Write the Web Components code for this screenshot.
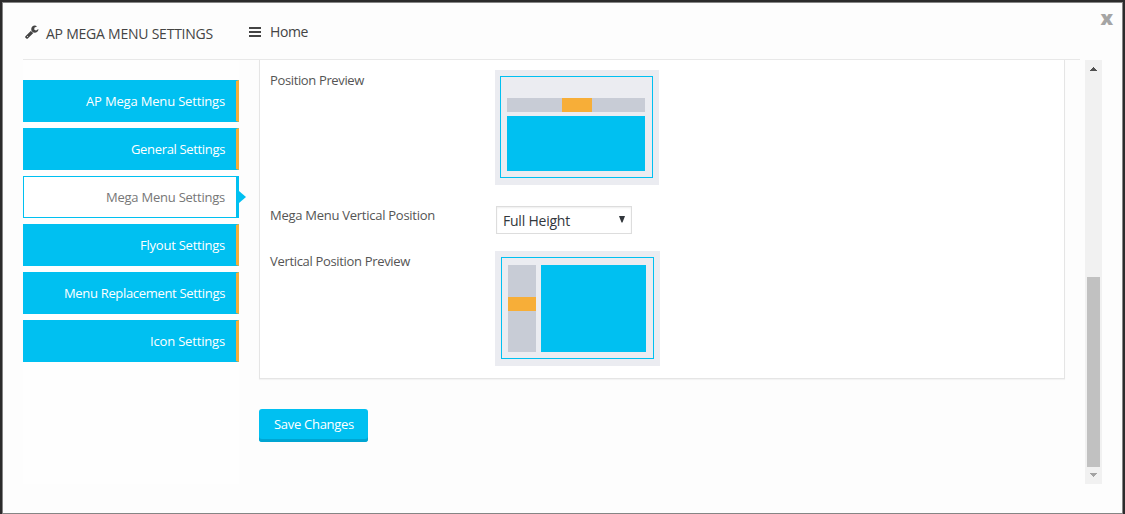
<!DOCTYPE html>
<html lang="en">
<head>
<meta charset="utf-8">
<title>AP Mega Menu Settings</title>
<style>
html,body{margin:0;height:100%;overflow:hidden;background:#2c2b2c}
body{font-family:"Open Sans","Noto Sans",sans-serif;font-size:13px;color:#555}
</style>
</head>
<body>
<settings-modal></settings-modal>
<script>
function define(name, html) {
  const template = document.createElement('template');
  template.innerHTML = html;
  customElements.define(name, class extends HTMLElement {
    constructor() {
      super();
      this.attachShadow({ mode: 'open' }).append(template.content.cloneNode(true));
    }
  });
}

/* One line of text, tracked so that it fills the width given in "w". */
customElements.define('fit-text', class extends HTMLElement {
  constructor() {
    super();
    this.attachShadow({ mode: 'open' }).innerHTML =
      '<style>:host{display:inline-block;white-space:nowrap;flex:none}span{display:inline-block}</style><span><slot></slot></span>';
  }
  connectedCallback() {
    const span = this.shadowRoot.querySelector('span');
    const target = Number(this.getAttribute('w'));
    const gap = (target - span.getBoundingClientRect().width) / this.textContent.length;
    span.style.letterSpacing = gap.toFixed(3) + 'px';
    this.style.width = target + 'px';
  }
});

define('wrench-icon', `
<style>:host{display:block;width:14px;height:14px}svg{display:block}</style>
<svg width="14" height="14" viewBox="0 64 1728 1728"><path fill="#444" d="M384 1472q0-26-19-45t-45-19-45 19-19 45 19 45 45 19 45-19 19-45zm644-420l-682 682q-37 37-90 37-52 0-91-37l-106-108q-38-36-38-90 0-53 38-91l681-681q39 98 114.500 173.500t173.500 114.500zm634-435q0 39-23 106-47 134-164.500 217.500t-258.500 83.500q-185 0-316.500-131.500t-131.500-316.500 131.500-316.500 316.500-131.500q58 0 121.500 16.500t107.500 46.500q16 11 16 28t-16 28l-293 169v224l193 107q5-3 79-48.500t135.500-81 70.500-35.500q15 0 23.500 10t8.500 25z"/></svg>`);

define('bars-icon', `
<style>:host{display:flex;flex-direction:column;gap:2px;width:12px}i{height:2px;background:#444}</style><i></i><i></i><i></i>`);

define('modal-header', `
<style>
:host{display:flex;height:56px;width:1057px;border-bottom:1px solid #e8e8e8;color:#444;font-size:14px;line-height:20px}
wrench-icon{margin:22px 0 0 2px}
.title{margin:21px 0 0 7px;height:20px}
bars-icon{margin:24px 0 0 36px}
.home{margin:19px 0 0 9px;height:20px}
</style>
<wrench-icon></wrench-icon><fit-text class="title" w="167">AP MEGA MENU SETTINGS</fit-text>
<bars-icon></bars-icon><fit-text class="home" w="38">Home</fit-text>`);

define('nav-tab', `
<style>
:host{display:flex;position:relative;box-sizing:border-box;height:42px;border:1px solid #00c0f1;border-right:3px solid #f7ae38;background:#00c0f1;color:#fff;justify-content:flex-end;padding:10px 11px 0 0;line-height:20px}
:host([active]){background:#fff;color:#777;border-right-color:#00c0f1}
:host([active])::after{content:"";position:absolute;left:100%;top:14px;margin-left:3px;border:6px solid transparent;border-left:7px solid #00c0f1;border-right:0}
</style><slot></slot>`);

define('side-nav', `
<style>:host{display:flex;flex-direction:column;gap:6px;box-sizing:border-box;width:216px;height:424px;padding-top:20px;background:#fefefe;flex:none}</style>
<nav-tab><fit-text w="139">AP Mega Menu Settings</fit-text></nav-tab>
<nav-tab><fit-text w="94">General Settings</fit-text></nav-tab>
<nav-tab active><fit-text w="119">Mega Menu Settings</fit-text></nav-tab>
<nav-tab><fit-text w="85">Flyout Settings</fit-text></nav-tab>
<nav-tab><fit-text w="161">Menu Replacement Settings</fit-text></nav-tab>
<nav-tab><fit-text w="75">Icon Settings</fit-text></nav-tab>`);

define('horizontal-preview', `
<style>
:host{display:block;box-sizing:border-box;width:164px;height:115px;background:#ebecf1;padding:6px 6px 7px 5px}
.frame{box-sizing:border-box;width:153px;height:102px;border:1px solid #00c0f1;padding:21px 7px 6px 6px}
.bar{height:14px;background:#c8ccd6;padding-left:55px}
.bar i{display:block;width:30px;height:14px;background:#f7ae38}
.panel{margin-top:4px;height:55px;background:#00c0f1}
</style><div class="frame"><div class="bar"><i></i></div><div class="panel"></div></div>`);

define('vertical-preview', `
<style>
:host{display:block;box-sizing:border-box;width:165px;height:115px;background:#ebecf1;padding:6px}
.frame{box-sizing:border-box;display:flex;gap:5px;width:153px;height:102px;border:1px solid #00c0f1;padding:7px 7px 6px 6px}
.bar{width:28px;height:55px;padding-top:32px;background:#c8ccd6}
.bar i{display:block;height:14px;background:#f7ae38}
.panel{width:105px;height:87px;background:#00c0f1}
</style><div class="frame"><div class="bar"><i></i></div><div class="panel"></div></div>`);

define('select-box', `
<style>
:host{display:flex;justify-content:space-between;box-sizing:border-box;width:136px;height:28px;margin-left:1px;border:1px solid #ddd;background:#fff;box-shadow:inset 0 1px 2px rgba(0,0,0,.07);padding:4px 6px 0;color:#32373c;font-size:14px;line-height:20px}
svg{margin-top:5px;display:block}
</style><slot></slot><svg width="6" height="7"><path d="M0 0h6L3.500 6.500h-1Z" fill="#32373c"/></svg>`);

define('field-row', `
<style>:host{display:grid;grid-template-columns:225px auto;justify-content:start;align-items:start}.label{line-height:20px;height:20px;margin-top:var(--label-shift,0)}</style>
<div class="label"><slot name="label"></slot></div><slot></slot>`);

define('settings-panel', `
<style>
:host{display:flex;flex-direction:column;box-sizing:border-box;width:806px;height:319px;border:1px solid #e5e5e5;border-top:0;background:#fff;padding:10px 0 0 10px;box-shadow:0 1px 1px rgba(0,0,0,.04)}
.select{margin-top:21px;--label-shift:-1px}.last{margin-top:17px}
</style>
<field-row><fit-text slot="label" w="94">Position Preview</fit-text><horizontal-preview></horizontal-preview></field-row>
<field-row class="select"><fit-text slot="label" w="165">Mega Menu Vertical Position</fit-text><select-box><fit-text w="67">Full Height</fit-text></select-box></field-row>
<field-row class="last"><fit-text slot="label" w="140">Vertical Position Preview</fit-text><vertical-preview></vertical-preview></field-row>`);

define('save-button', `
<style>:host{display:flex;box-sizing:border-box;width:109px;height:33px;border-radius:3px;background:#00c0f1;box-shadow:inset 0 -3px #00a5d2;color:#fff;padding:5px 0 0 15px;line-height:20px}</style><slot></slot>`);

define('scroll-bar', `
<style>
:host{display:flex;flex-direction:column;align-items:center;width:17px;height:424px;background:#f1f1f1;flex:none}
svg{display:block;flex:none;shape-rendering:crispEdges}
.up{margin-top:7px}.thumb{margin-top:206px;width:13px;height:190px;background:#c1c1c1}.down{margin-top:6px}
</style>
<svg class="up" width="7" height="4"><path d="M3 0h1v1h1v1h1v1h1v1H0V3h1V2h1V1h1Z" fill="#505050"/></svg>
<div class="thumb"></div>
<svg class="down" width="7" height="4"><path d="M0 0h7v1H6v1H5v1H4v1H3V3H2V2H1V1H0Z" fill="#a3a3a3"/></svg>`);

define('close-button', `
<style>:host{position:absolute;right:9px;top:6px;color:#a5a5a5;font-size:20px;line-height:18px;font-weight:800}</style><slot></slot>`);

define('settings-modal', `
<style>
:host{display:block;position:relative;box-sizing:border-box;width:1121px;height:512px;margin:2px 0 0 2px;border:1px solid #858585;background:#fdfdfd;padding-left:20px}
.body{display:flex}
.content{margin-left:20px;width:806px}
save-button{margin-top:30px}
scroll-bar{margin-left:20px}
</style>
<modal-header></modal-header>
<div class="body"><side-nav></side-nav>
<div class="content"><settings-panel></settings-panel><save-button><fit-text w="80">Save Changes</fit-text></save-button></div>
<scroll-bar></scroll-bar></div>
<close-button>x</close-button>`);
</script>
</body>
</html>
